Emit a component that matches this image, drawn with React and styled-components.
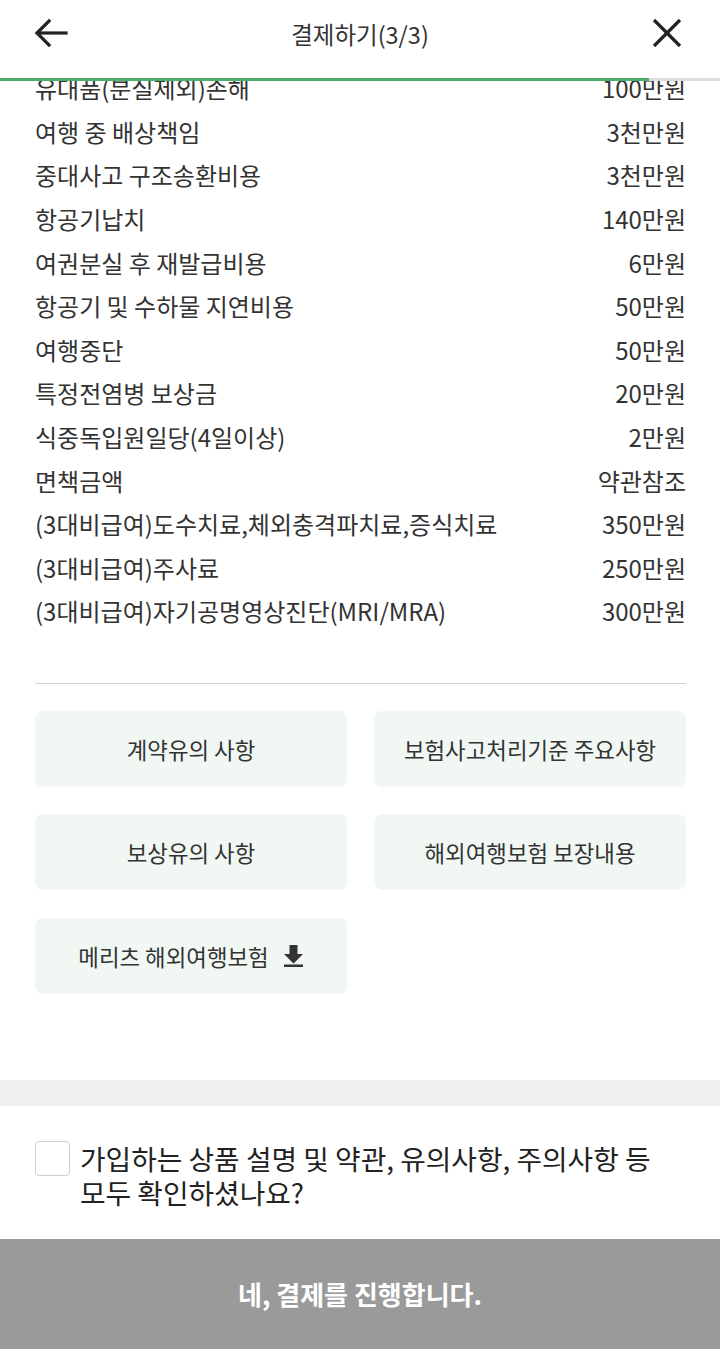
import React, { useState } from 'react';
import styled, { createGlobalStyle } from 'styled-components';

const rows = [
	['유대품(분실제외)손해', '100만원'],
	['여행 중 배상책임', '3천만원'],
	['중대사고 구조송환비용', '3천만원'],
	['항공기납치', '140만원'],
	['여권분실 후 재발급비용', '6만원'],
	['항공기 및 수하물 지연비용', '50만원'],
	['여행중단', '50만원'],
	['특정전염병 보상금', '20만원'],
	['식중독입원일당(4일이상)', '2만원'],
	['면책금액', '약관참조'],
	['(3대비급여)도수치료,체외충격파치료,증식치료', '350만원'],
	['(3대비급여)주사료', '250만원'],
	['(3대비급여)자기공명영상진단(MRI/MRA)', '300만원'],
];

const docs = [
	{ label: '계약유의 사항' },
	{ label: '보험사고처리기준 주요사항' },
	{ label: '보상유의 사항' },
	{ label: '해외여행보험 보장내용' },
	{ label: '메리츠 해외여행보험', download: true },
];

const App = () => {
	const [agreed, setAgreed] = useState(false);

	return (
		<>
			<GlobalStyle />
			<Header>
				<HeaderBar>
					<IconButton aria-label="back">
						<svg width="34" height="30" viewBox="0 0 34 30" fill="none" stroke="#222" strokeWidth="3.2" strokeLinecap="square">
							<path d="M4 15H32" />
							<path d="M15 3L3 15L15 27" />
						</svg>
					</IconButton>
					<Title>결제하기(3/3)</Title>
					<IconButton aria-label="close">
						<svg width="30" height="30" viewBox="0 0 30 30" fill="none" stroke="#222" strokeWidth="3.2">
							<path d="M2 2L28 28" />
							<path d="M28 2L2 28" />
						</svg>
					</IconButton>
				</HeaderBar>
				<Progress>
					<ProgressFill style={{ width: `${(649 / 720) * 100}%` }} />
				</Progress>
			</Header>

			<Main>
				<CoverageList>
					{rows.map(([name, amount]) => (
						<CoverageRow key={name}>
							<span>{name}</span>
							<span>{amount}</span>
						</CoverageRow>
					))}
				</CoverageList>
				<Divider />
				<DocGrid>
					{docs.map((doc) => (
						<DocButton key={doc.label}>
							{doc.label}
							{doc.download && (
								<svg width="21" height="22" viewBox="0 0 21 22" fill="#333">
									<path d="M6.5 0h8v9h5.5l-9.5 9.5L1 9h5.5z" />
									<rect x="1" y="19.5" width="19" height="2.5" />
								</svg>
							)}
						</DocButton>
					))}
				</DocGrid>
			</Main>

			<SectionGap />

			<AgreeSection>
				<Checkbox
					$checked={agreed}
					onClick={() => setAgreed(!agreed)}
					aria-label="agree"
				/>
				<AgreeText>
					<span>가입하는 상품 설명 및 약관, 유의사항, 주의사항 등</span>
					<span>모두 확인하셨나요?</span>
				</AgreeText>
			</AgreeSection>

			<SubmitButton $active={agreed}>네, 결제를 진행합니다.</SubmitButton>
		</>
	);
};

export default App;

const GlobalStyle = createGlobalStyle`
	* {
		box-sizing: border-box;
	}
	body {
		margin: 0;
		background: #fff;
		font-family: 'Noto Sans CJK KR', 'Noto Sans', sans-serif;
		color: #333;
	}
`;

const Header = styled.header`
	position: fixed;
	top: 0;
	left: 0;
	right: 0;
	z-index: 10;
	background: #fff;
`;

const HeaderBar = styled.div`
	display: flex;
	align-items: center;
	justify-content: space-between;
	height: 78px;
	padding: 0 38px 12px 34px;
`;

const IconButton = styled.button`
	display: flex;
	align-items: center;
	justify-content: center;
	padding: 0;
	border: none;
	background: none;
`;

const Title = styled.h1`
	margin: 2px 0 0;
	font-size: 23.5px;
	font-weight: 400;
	color: #333;
`;

const Progress = styled.div`
	height: 3px;
	background: #dcdcdc;
`;

const ProgressFill = styled.div`
	height: 100%;
	background: #4caf6c;
`;

const Main = styled.main`
	padding: 66px 34px 86px 35px;
`;

const CoverageList = styled.div`
	display: flex;
	flex-direction: column;
`;

const CoverageRow = styled.div`
	display: flex;
	justify-content: space-between;
	align-items: center;
	height: 43.6px;
	font-size: 24px;
	color: #333;
	white-space: nowrap;
`;

const Divider = styled.hr`
	margin: 50px 0 27px;
	border: none;
	border-top: 1.5px solid #d4d4d4;
`;

const DocGrid = styled.div`
	display: grid;
	grid-template-columns: 1fr 1fr;
	column-gap: 27px;
	row-gap: 27.5px;
`;

const DocButton = styled.button`
	display: flex;
	align-items: center;
	justify-content: center;
	gap: 14px;
	height: 76px;
	border: none;
	border-radius: 8px;
	background: #f1f8f4;
	font-family: inherit;
	font-size: 22.4px;
	color: #333;
`;

const SectionGap = styled.div`
	height: 26px;
	background: #eff0f2;
`;

const AgreeSection = styled.div`
	display: flex;
	align-items: flex-start;
	gap: 10px;
	padding: 35px 20px 30px 35px;
`;

const Checkbox = styled.button`
	flex-shrink: 0;
	width: 35px;
	height: 35px;
	padding: 0;
	border: 1.5px solid #cfcfcf;
	border-radius: 4px;
	background: ${(props) => (props.$checked ? '#4caf6c' : '#fff')};
`;

const AgreeText = styled.p`
	display: flex;
	flex-direction: column;
	margin: 0;
	font-size: 27.8px;
	line-height: 34px;
	color: #222;
	white-space: nowrap;
`;

const SubmitButton = styled.button`
	display: block;
	width: 100%;
	height: 110px;
	border: none;
	background: ${(props) => (props.$active ? '#4caf6c' : '#9a9a9a')};
	color: #fff;
	font-family: inherit;
	font-size: 26px;
	font-weight: 700;
`;
